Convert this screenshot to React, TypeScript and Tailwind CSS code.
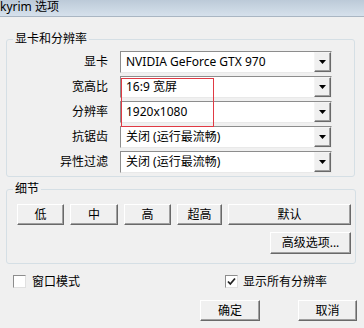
import React from 'react';

const font = { fontFamily: '"Noto Sans", "Noto Sans CJK SC", sans-serif' };

const Arrow = () => (
  <svg width="7" height="4" viewBox="0 0 7 4">
    <path d="M0 0h7L3.5 4z" fill="#000" />
  </svg>
);

const Combo: React.FC<{ value: string }> = ({ value }) => (
  <div className="flex h-[22px] w-[212px] items-stretch border border-t-[#8d8d8d] border-l-[#8d8d8d] border-r-[#e9e9e9] border-b-[#e9e9e9] bg-white">
    <span className="flex flex-1 items-center pl-[5px] text-[12px] leading-none text-black">{value}</span>
    <span className="flex w-[17px] items-center justify-center border border-t-[#f4f4f4] border-l-[#f4f4f4] border-r-[#696969] border-b-[#696969] bg-[#f0f0f0] shadow-[inset_-1px_-1px_0_#a0a0a0]">
      <Arrow />
    </span>
  </div>
);

const Row: React.FC<{ label: string; value: string }> = ({ label, value }) => (
  <div className="flex h-[22px] items-center">
    <span className="w-[101px] text-right text-[12px] leading-none">{label}</span>
    <span className="w-[12px]" />
    <Combo value={value} />
  </div>
);

const Btn: React.FC<{ label: string; w: string; h?: string }> = ({ label, w, h = 'h-[21px]' }) => (
  <button className={`${w} ${h} flex shrink-0 items-center justify-center border border-t-white border-l-white border-r-[#696969] border-b-[#696969] bg-[#f0f0f0] text-[12px] leading-none text-black shadow-[inset_-1px_-1px_0_#a0a0a0]`}>
    {label}
  </button>
);

const Check: React.FC<{ checked?: boolean }> = ({ checked }) => (
  <span className="flex h-[13px] w-[13px] shrink-0 items-center justify-center border border-t-[#8d8d8d] border-l-[#8d8d8d] border-r-[#e0e0e0] border-b-[#e0e0e0] bg-white">
    {checked && (
      <svg width="9" height="9" viewBox="0 0 9 9">
        <path d="M1 4.5l2.3 2.5L8 1.5" fill="none" stroke="#222" strokeWidth="1.8" />
      </svg>
    )}
  </span>
);

export default function App() {
  return (
    <div style={font} className="flex h-[328px] w-[364px] flex-col overflow-hidden bg-[#f0f0f0] text-black">
      <div className="flex h-[17px] items-start border-b border-[#aab6c3] bg-gradient-to-b from-[#bccad8] to-[#d6e1ec] text-[12px] leading-[14px]">
        <span className="whitespace-nowrap">kyrim 选项</span>
      </div>

      <div className="flex flex-col pl-[6px] pr-[9px]">
        <fieldset className="mt-[15px] rounded-[3px] border border-[#d5dfe5] px-0 pb-[3px] pt-[5px]">
          <legend className="ml-[6px] px-[2px] text-[12px] leading-[14px]">显卡和分辨率</legend>
          <div className="flex flex-col gap-[3px]">
            <Row label="显卡" value="NVIDIA GeForce GTX 970" />
            <div className="relative flex flex-col gap-[3px]">
              <Row label="宽高比" value="16:9 宽屏" />
              <Row label="分辨率" value="1920x1080" />
              <div className="pointer-events-none absolute left-[114px] top-[2px] h-[49px] w-[93px] border border-[#e03a44]" />
            </div>
            <Row label="抗锯齿" value="关闭 (运行最流畅)" />
            <Row label="异性过滤" value="关闭 (运行最流畅)" />
          </div>
        </fieldset>

        <fieldset className="mt-[5px] rounded-[3px] border border-[#d5dfe5] pb-[9px] pl-[10px] pr-[4px] pt-[8px]">
          <legend className="ml-[-4px] px-[2px] text-[12px] leading-[14px]">细节</legend>
          <div className="flex gap-[6px]">
            <Btn label="低" w="w-[47px]" />
            <Btn label="中" w="w-[48px]" />
            <Btn label="高" w="w-[47px]" />
            <Btn label="超高" w="w-[45px]" />
            <Btn label="默认" w="w-[123px]" />
          </div>
          <div className="mt-[7px] flex justify-end">
            <Btn label="高级选项..." w="w-[81px]" h="h-[22px]" />
          </div>
        </fieldset>

        <div className="mt-[11px] flex h-[13px] items-center whitespace-nowrap text-[12px] leading-none">
          <span className="ml-[7px]"><Check /></span>
          <span className="ml-[6px]">窗口模式</span>
          <span className="ml-[145px]"><Check checked /></span>
          <span className="ml-[5px]">显示所有分辨率</span>
        </div>

        <div className="mr-[-2px] mt-[12px] flex justify-end gap-[38px]">
          <Btn label="确定" w="w-[60px]" />
          <Btn label="取消" w="w-[59px]" />
        </div>
      </div>
    </div>
  );
}
